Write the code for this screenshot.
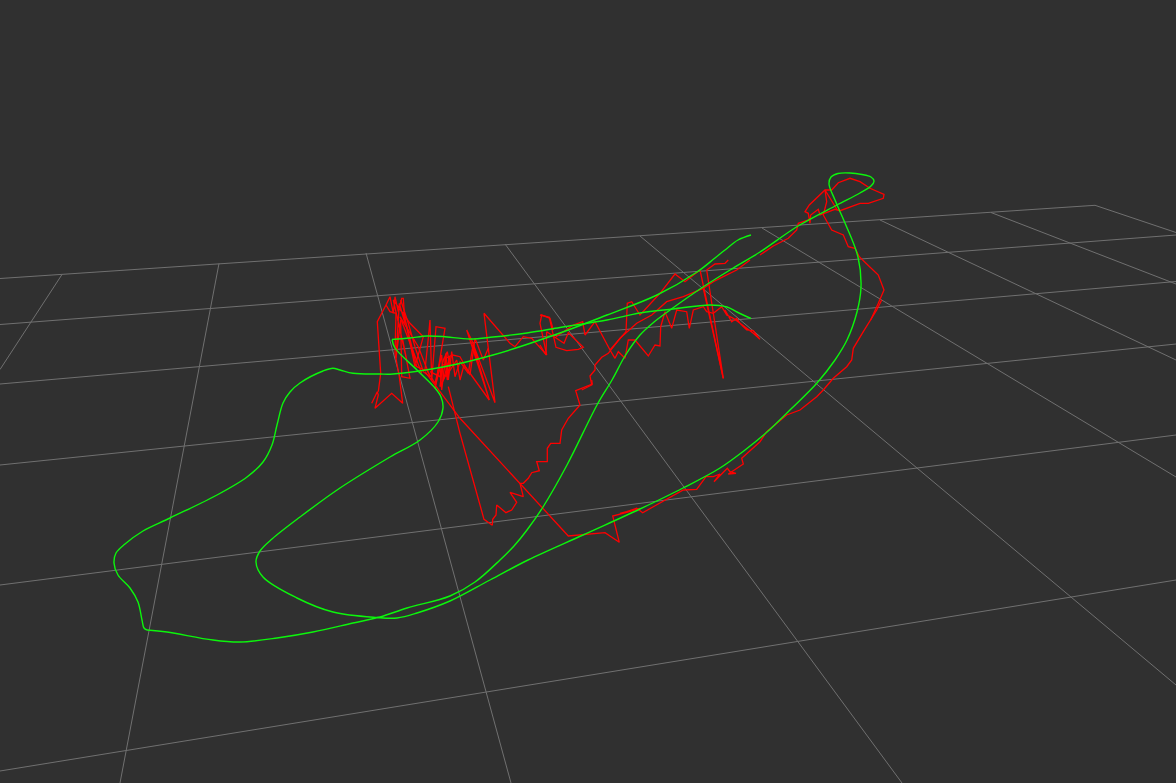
type P = [number, number];

const gridLines: [number, number, number, number][] = [
  [0, 278.5, 1095, 205.3],
  [0, 324.5, 1176, 235],
  [0, 384, 1176, 281.5],
  [0, 465, 1176, 344],
  [0, 585, 1176, 435],
  [0, 771, 1176, 580],
  [1095, 205.3, 1176, 232.5],
  [991, 212.5, 1176, 284],
  [880, 220, 1176, 360],
  [762, 228, 1176, 477],
  [640, 236, 1176, 685],
  [505, 244, 902, 783],
  [366, 253, 511, 783],
  [219, 263.5, 120, 783],
  [62, 274.5, 0, 369.5],
];

// Centripetal Catmull-Rom spline through the points, for the smooth reference trajectory
function smooth(pts: P[]): string {
  const dist = (a: P, b: P) => Math.sqrt(Math.hypot(a[0] - b[0], a[1] - b[1]));
  let d = `M${pts[0][0]} ${pts[0][1]}`;
  for (let i = 0; i < pts.length - 1; i++) {
    const p0 = pts[Math.max(i - 1, 0)];
    const p1 = pts[i];
    const p2 = pts[i + 1];
    const p3 = pts[Math.min(i + 2, pts.length - 1)];
    const d1 = dist(p0, p1);
    const d2 = dist(p1, p2);
    const d3 = dist(p2, p3);
    const ctrl = (a: P, b: P, c: P, da: number, db: number): P => {
      if (da === 0) return b;
      const k = 2 * da * da + 3 * da * db + db * db;
      const n = 3 * da * (da + db);
      return [(da * da * c[0] - db * db * a[0] + k * b[0]) / n, (da * da * c[1] - db * db * a[1] + k * b[1]) / n];
    };
    const c1 = ctrl(p0, p1, p2, d1, d2);
    const c2 = ctrl(p3, p2, p1, d3, d2);
    d += `C${c1[0].toFixed(1)} ${c1[1].toFixed(1)} ${c2[0].toFixed(1)} ${c2[1].toFixed(1)} ${p2[0]} ${p2[1]}`;
  }
  return d;
}

const greenA: P[] = [
  [751, 318.5], [737, 312], [727, 307], [710, 305], [673, 309], [640, 313], [607, 320], [560, 327.5], [527, 333],
  [493, 337], [470, 339], [443, 336.5], [427, 336], [410, 338], [392, 339.5],
];
const greenB: P[] = [
  [392, 339.5], [395, 348], [417, 370], [435, 388], [441, 397], [443, 408], [438, 422], [420, 440], [390, 457], [340, 488],
  [300, 517], [272, 539], [260, 551], [256, 562], [263, 577], [297, 598], [333, 612], [377, 617.5], [397, 618], [417, 613],
  [450, 601], [490, 580], [528, 560], [583, 535], [640, 509], [683, 488], [720, 468], [745, 450], [767, 432], [792, 408], [817, 383],
  [835, 360], [847, 340], [857, 312], [861, 287], [858, 257], [845, 223], [835, 200], [829, 184], [831, 177], [838, 173.5], [850, 173],
  [862, 174.5], [871, 177], [874, 181], [871, 186], [860, 193], [837, 205], [798, 226], [760, 252], [730, 270], [703, 287], [670, 310], [654, 322], [640, 335],
  [625, 356], [612, 380], [597, 405], [567, 465], [543, 507], [527, 530], [514, 546], [500, 560], [475, 582], [450, 596], [407, 608],
  [380, 617], [353, 623], [313, 632], [277, 638], [240, 642], [213, 640], [167, 632], [147, 630],
];
const greenC: P[] = [
  [147, 630], [144, 628], [142, 620], [138, 602], [130, 588], [118, 575], [114, 563], [116, 553], [125, 544],
  [143, 531], [170, 518], [217, 495], [247, 477], [263, 462], [272, 445], [277, 425], [283, 403], [290, 392],
  [300, 383], [323, 371], [333, 368.3], [340, 370], [353, 373.3], [380, 374], [393, 374], [443, 367], [493, 355],
  [560, 333], [607, 315], [657, 295], [697, 272], [715, 258], [725, 250], [738, 240], [751, 235],
];

const toPath = (ox: number, oy: number, s: string) =>
  "M" +
  s
    .trim()
    .split(/\s+/)
    .map((p) => {
      const [x, y] = p.split(",").map(Number);
      return `${(ox + x / 3).toFixed(1)} ${(oy + y / 3).toFixed(1)}`;
    })
    .join("L");

// Estimated trajectory, traced from the picture
const red = [
  toPath(360, 280, "35,370 52,335 55,345 45,385 95,340 128,370 118,290 105,220 108,100 90,95 78,75 52,125 62,280 55,335"),
  toPath(360, 280, "78,75 90,50 100,100 105,50 115,95 125,55 130,55 135,130 118,70 108,235 122,120 125,290 150,295 128,180 140,240 100,60 150,130 190,170 165,260 130,95 170,260 195,270 205,175 210,120 215,300 228,140 255,145 225,325"),
  toPath(360, 280, "122,60 145,130 165,200 190,275 210,290 175,200 120,110 150,190 185,280"),
  toPath(360, 280, "225,325 240,260 245,330 258,220 265,300 275,215 285,290 300,245 325,280 340,190 320,150 388,360 335,180 405,368 372,100 450,190 465,200 490,170 515,175 560,225 540,130 545,105 570,115 580,150"),
  toPath(360, 280, "210,275 240,290 250,240 262,215 270,260 240,320 248,255 272,250 262,300 255,235 278,225 300,230 330,285 345,175 370,240 385,205"),
  toPath(360, 280, "200,270 225,310 245,225 250,300 270,230 258,290 290,240 300,300 312,255 388,360"),
  toPath(540, 260, "0,165 28,172 48,262 80,272 115,268 130,262 85,218 72,250 20,215 18,285 0,255"),
  toPath(540, 260, "48,230 100,195 128,185 135,225 165,185 210,270 225,295 235,275 255,295 265,240 285,240 325,288 345,255 360,258 362,200 375,155 395,205 410,150 440,155 448,205 460,150 490,140 500,155 520,160 545,140 560,165 580,175 600,190 620,205 640,220 660,238 640,212 620,210 600,190 590,175 575,185 555,150"),
  toPath(540, 260, "210,270 258,215 262,130 275,125 300,165 360,100 405,42 435,65 480,30 550,355 500,30 525,12 555,10 565,0"),
  toPath(540, 260, "490,85 550,355"),
  toPath(540, 260, "125,390 155,375 150,348 165,330 165,315 185,292 205,280 240,235 290,190 335,165 380,125 430,110 490,85 520,65 550,50 590,30 630,0"),
  toPath(460, 380, "395,0 397,12 347,32 360,75 325,115 305,150 300,190 272,190 262,205 262,245 230,245 238,272 215,278 205,295 190,310 180,310 190,350 150,337 170,367 155,390 138,398 110,375 108,405 98,418 97,436 72,418 0,160 -35,20"),
  toPath(460, 380, "-105,-25 0,115 325,468 435,458 478,487 458,408 500,397 530,388 540,385"),
  toPath(620, 300, "0,640 20,635 50,625 68,638 100,620 190,570 230,568 258,530 280,530 300,522 282,545 322,505 330,515 348,520 325,522 370,492 365,475 420,425 440,395 500,345 540,330 590,290 610,270 640,235 680,200 695,180 700,145 730,95 770,30 785,0"),
  toPath(760, 160, "332,480 355,430 372,390 355,345 318,310 298,290 285,265 265,260 250,225 215,210 190,165 200,125 195,90 232,150"),
  toPath(760, 160, "0,285 40,258 85,235 110,210 115,190 150,178 150,190 152,165 175,148 180,165 225,148 240,152 300,130 325,130 370,115 372,103 330,85 300,65 270,55 235,68 215,90 195,90 148,135 135,155 145,160 150,190"),
];

export default function App() {
  return (
    <div className="h-[783px] w-[1176px] overflow-hidden bg-[#303030]">
      <svg className="block" width="1176" height="783" viewBox="0 0 1176 783" fill="none">
        <g stroke="#707070" strokeWidth="1">
          {gridLines.map(([x1, y1, x2, y2], i) => (
            <line key={i} x1={x1} y1={y1} x2={x2} y2={y2} />
          ))}
        </g>
        <g stroke="#ff0000" strokeWidth="1.3" strokeLinejoin="miter" strokeMiterlimit="2">
          {red.map((d, i) => (
            <path key={i} d={d} />
          ))}
        </g>
        <g stroke="#0cf50c" strokeWidth="1.4">
          <path d={smooth(greenA)} />
          <path d={smooth(greenB)} />
          <path d={smooth(greenC)} />
        </g>
      </svg>
    </div>
  );
}
